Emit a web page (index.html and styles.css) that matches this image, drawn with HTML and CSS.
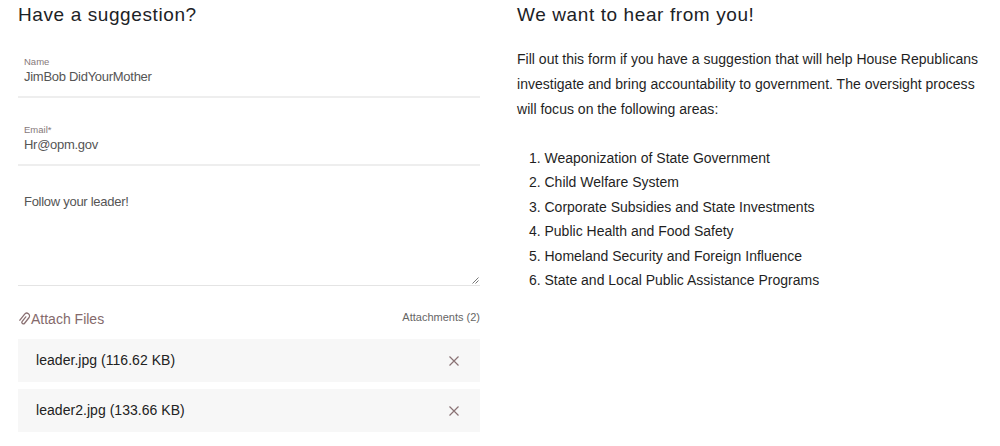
FILE: index.html
```html
<!DOCTYPE html>
<html lang="en">
<head>
<meta charset="utf-8">
<title>Have a suggestion?</title>
<link rel="stylesheet" href="styles.css">
</head>
<body>
<main class="page">
  <section class="form-col">
    <h2 class="heading">Have a suggestion?</h2>
    <div class="field field-name">
      <label class="label">Name</label>
      <div class="value">JimBob DidYourMother</div>
    </div>
    <div class="field field-email">
      <label class="label">Email*</label>
      <div class="value">Hr@opm.gov</div>
    </div>
    <div class="textarea">
      <div class="value">Follow your leader!</div>
      <svg class="grip" width="7" height="7" viewBox="0 0 7 7"><path d="M0.5 6.5 6.5 0.5M3.5 6.5 6.5 3.5" stroke="#777" stroke-width="1" fill="none"/></svg>
    </div>
    <div class="attach-row">
      <div class="attach">
        <svg class="clip" width="13" height="14" viewBox="0 0 13 14"><path transform="rotate(38 6.500 7)" d="M6.200 4.500V10.300a1.500 1.500 0 0 0 3 0V3.300a2.800 2.800 0 0 0-5.600 0V10.800" stroke="#8a7072" stroke-width="1.300" fill="none" stroke-linecap="round"/></svg>
        <span>Attach Files</span>
      </div>
      <div class="count">Attachments (2)</div>
    </div>
    <div class="file">
      <span>leader.jpg (116.62 KB)</span>
      <svg class="x" width="10" height="10" viewBox="0 0 10 10"><path d="M0.500 0.500 9.500 9.500M9.500 0.500 0.500 9.500" stroke="#8a7274" stroke-width="1.200" fill="none"/></svg>
    </div>
    <div class="file">
      <span>leader2.jpg (133.66 KB)</span>
      <svg class="x" width="10" height="10" viewBox="0 0 10 10"><path d="M0.500 0.500 9.500 9.500M9.500 0.500 0.500 9.500" stroke="#8a7274" stroke-width="1.200" fill="none"/></svg>
    </div>
  </section>
  <section class="info-col">
    <h2 class="heading">We want to hear from you!</h2>
    <p class="intro">Fill out this form if you have a suggestion that will help House Republicans investigate and bring accountability to government. The oversight process will focus on the following areas:</p>
    <ol class="areas">
      <li>Weaponization of State Government</li>
      <li>Child Welfare System</li>
      <li>Corporate Subsidies and State Investments</li>
      <li>Public Health and Food Safety</li>
      <li>Homeland Security and Foreign Influence</li>
      <li>State and Local Public Assistance Programs</li>
    </ol>
  </section>
</main>
</body>
</html>
```

FILE: styles.css
```css
* { box-sizing: border-box; }
html, body { margin: 0; padding: 0; background: #fff; }
body { font-family: "Liberation Sans", Arial, sans-serif; color: #1b1b1b; overflow: hidden; height: 446px; }
.page { display: grid; grid-template-columns: 462px 463px; column-gap: 37px; padding: 0 0 0 18px; }
.heading { margin: 0; font-size: 19px; line-height: 30px; font-weight: 400; letter-spacing: 0.6px; color: #1c2226; }
.field { border-bottom: 2px solid #eeeeee; padding-left: 6px; }
.field-name { margin-top: 26px; height: 42px; }
.field-email { margin-top: 26px; height: 42px; }
.label { display: block; font-size: 9.500px; line-height: 12px; color: #86797a; }
.value { font-size: 13px; line-height: 17px; letter-spacing: -0.28px; color: #555; }
.textarea { position: relative; margin-top: 0; height: 120px; padding: 27px 6px 0; border-bottom: 1px solid #e4e4e4; }
.grip { position: absolute; right: 1px; bottom: 1px; }
.attach-row { display: flex; justify-content: space-between; align-items: flex-start; margin-top: 24px; height: 29px; }
.attach { display: flex; align-items: center; gap: 0; font-size: 14px; line-height: 18px; color: #84696b; }
.clip { display: block; }
.count { font-size: 11px; line-height: 14px; color: #666; }
.file { display: flex; align-items: center; justify-content: space-between; height: 43px; margin-bottom: 7px; padding: 0 21px 0 18px; background: #f7f7f7; font-size: 14px; letter-spacing: 0.04px; color: #222; }
.file span { position: relative; top: -1px; }
.info-col { min-width: 0; }
.intro { margin: 17px 0 0; font-size: 14px; line-height: 25px; letter-spacing: 0.015px; color: #1f1f1f; }
.areas { margin: 23.700px 0 0; padding: 0 0 0 27.500px; font-size: 14px; line-height: 24.500px; color: #1f1f1f; }
```
